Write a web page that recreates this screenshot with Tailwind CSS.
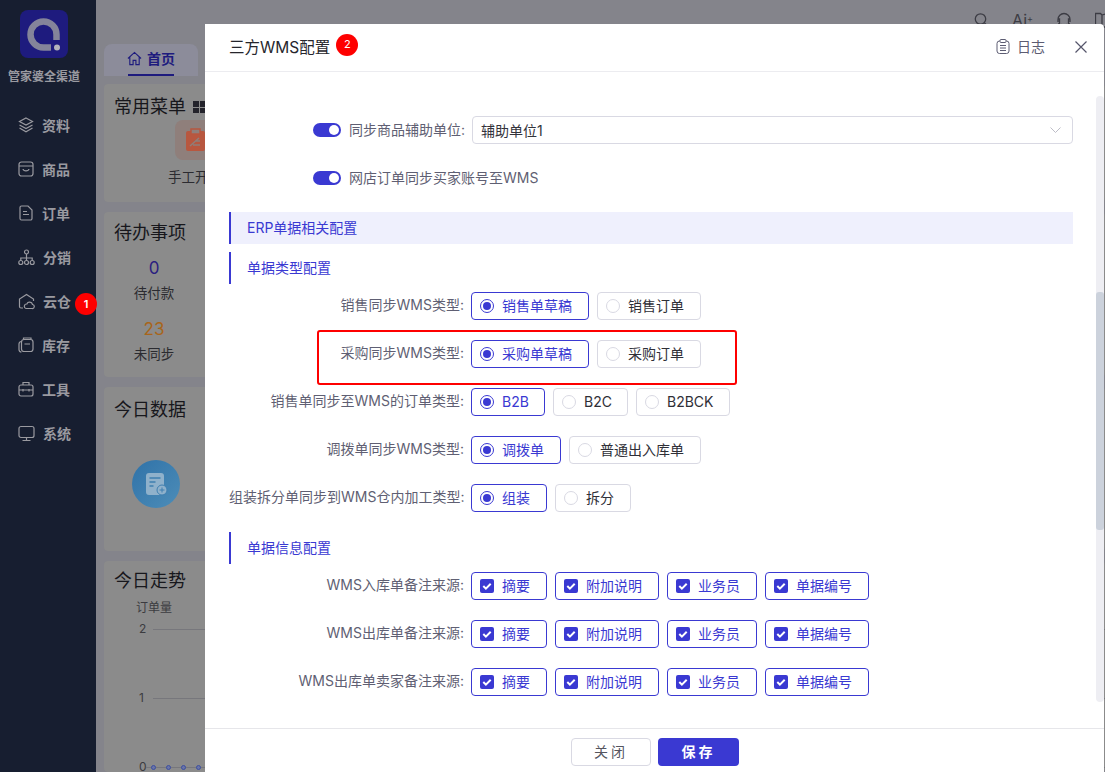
<!DOCTYPE html>
<html lang="zh-CN">
<head>
  <meta charset="UTF-8" />
  <title>三方WMS配置</title>
  <script src="https://cdn.jsdelivr.net/npm/@tailwindcss/browser@4"></script>
</head>
<body class="relative flex h-[772px] w-[1105px] overflow-hidden bg-[#84848b] font-['Inter','Noto_Sans_CJK_SC',sans-serif] text-[14px] text-[#2f2f37]">

  <!-- 左侧菜单 -->
  <aside class="flex w-[96px] shrink-0 flex-col bg-[#171e30] pt-[10px] text-[#9a9aa0]">
    <svg class="ml-[20px] h-[48px] w-[48px]" viewBox="0 0 48 48">
      <rect width="48" height="48" rx="8" fill="#1e1b7e"/>
      <path d="M31 37.500H23.500a13 13 0 1 1 13-13V30" fill="none" stroke="#84849a" stroke-width="6.500"/>
      <circle cx="37" cy="37.500" r="3" fill="#b4b4bc"/>
    </svg>
    <div class="ml-[8px] mt-[11px] text-[12px] font-bold leading-[16px] whitespace-nowrap">管家婆全渠道</div>
    <nav class="mt-[18px] flex w-full flex-col pl-[18px] text-[14px] font-bold">
      <a class="flex h-[44px] items-center gap-[8px]">
        <svg class="h-[16px] w-[16px]" viewBox="0 0 16 16" fill="none" stroke="currentColor" stroke-width="1.200"><path d="M8 1 14.500 4.500 8 8 1.500 4.500Z"/><path d="M1.500 8 8 11.500 14.500 8M1.500 11 8 14.800 14.500 11"/></svg>资料</a>
      <a class="flex h-[44px] items-center gap-[8px]">
        <svg class="h-[16px] w-[16px]" viewBox="0 0 16 16" fill="none" stroke="currentColor" stroke-width="1.200"><rect x="1" y="1" width="14" height="14" rx="2.500"/><path d="M1 5h14M5 8c.5 2.500 5.500 2.500 6 0"/></svg>商品</a>
      <a class="flex h-[44px] items-center gap-[8px]">
        <svg class="h-[16px] w-[16px]" viewBox="0 0 16 16" fill="none" stroke="currentColor" stroke-width="1.200"><path d="M2 2.500A1.500 1.500 0 0 1 3.500 1H10l4 4v8.500a1.500 1.500 0 0 1-1.500 1.500h-9A1.500 1.500 0 0 1 2 13.500Z"/><path d="M5 6.500h4M5 9.500h6"/></svg>订单</a>
      <a class="flex h-[44px] items-center gap-[8px]">
        <svg class="h-[17px] w-[17px]" viewBox="0 0 17 17" fill="none" stroke="currentColor" stroke-width="1.200"><circle cx="8.500" cy="3" r="2"/><circle cx="2.800" cy="13.500" r="2"/><circle cx="8.500" cy="13.500" r="2"/><circle cx="14.200" cy="13.500" r="2"/><path d="M8.500 5v6.500M2.800 11.500V9h11.400v2.500"/></svg>分销</a>
      <a class="flex h-[44px] items-center gap-[8px]">
        <svg class="h-[17px] w-[17px]" viewBox="0 0 17 17" fill="none" stroke="currentColor" stroke-width="1.200"><path d="M5 15H3a1.500 1.500 0 0 1-1.500-1.500V6L8.500 1.500 15.500 6v2"/><path d="M8 15.500h6a2 2 0 0 0 .5-4 3 3 0 0 0-5.700-.5A2.300 2.300 0 0 0 8 15.500Z"/></svg>云仓</a>
      <a class="flex h-[44px] items-center gap-[8px]">
        <svg class="h-[16px] w-[16px]" viewBox="0 0 16 16" fill="none" stroke="currentColor" stroke-width="1.200"><rect x="3.500" y="2.500" width="11.500" height="12" rx="2.500"/><path d="M3.500 4.500C1.500 4.500 1 6 1 7v5.500C1 14.500 2.500 15 3.500 15M5.500 2.500V1h7.500v1.500M6.500 7h5.500"/></svg>库存</a>
      <a class="flex h-[44px] items-center gap-[8px]">
        <svg class="h-[16px] w-[16px]" viewBox="0 0 16 16" fill="none" stroke="currentColor" stroke-width="1.200"><rect x="1" y="4" width="14" height="11" rx="2"/><path d="M5 4V1.500h6V4M1 9h14M5 8v2.500M11 8v2.500"/></svg>工具</a>
      <a class="flex h-[44px] items-center gap-[8px]">
        <svg class="h-[17px] w-[17px]" viewBox="0 0 17 17" fill="none" stroke="currentColor" stroke-width="1.200"><rect x="1" y="1.500" width="15" height="11" rx="2"/><path d="M8.500 12.500v3M4.500 15.500h8"/></svg>系统</a>
    </nav>
  </aside>

  <!-- 背后的首页 -->
  <main class="flex-1 pl-[8px] pt-[44px]">
    <div class="flex h-[32px] w-[94px] items-center justify-center gap-[5px] rounded-t-[8px] bg-[#8c8c9a] pb-[3px] text-[14px] font-bold text-[#1e1b7e]">
      <svg class="h-[15px] w-[15px]" viewBox="0 0 16 16" fill="none" stroke="currentColor" stroke-width="1.200"><path d="M1 8 8 1.500 15 8M3 6.500V14.500h3.500V10h3v4.500H13V6.500"/></svg>首页
    </div>
    <div class="ml-[24px] h-[2px] w-[46px] -translate-y-[2px] bg-[#1e1b7e]"></div>
    <div class="mt-[6px] flex flex-col gap-[10px]">
      <section class="h-[118px] rounded-[4px] bg-[#8b8b8b] pl-[10px] pt-[9px] text-[#17171c]">
        <h2 class="flex items-center gap-[7px] text-[18px] leading-[28px]">常用菜单
          <span class="grid h-[12px] w-[12px] grid-cols-2 gap-[1px]"><i class="bg-[#23232b]"></i><i class="bg-[#23232b]"></i><i class="bg-[#23232b]"></i><i class="bg-[#23232b]"></i></span>
        </h2>
        <div class="ml-[61px] mt-[-1px] flex h-[40px] w-[40px] items-center justify-center rounded-[8px] bg-[#8f7f7b]">
          <svg class="h-[24px] w-[24px]" viewBox="0 0 24 24"><rect x="3" y="3" width="19" height="20" rx="2" fill="#b8573f"/><rect x="8" y="1" width="9" height="5" fill="#8f7f7b" stroke="#b8573f" stroke-width="1.500"/><path d="M7 18 16 10M10 17h7M13 13h4" stroke="#8f7f7b" stroke-width="1.500"/></svg>
        </div>
        <div class="ml-[54px] mt-[7px] text-[13.500px] whitespace-nowrap text-[#2b2b30]">手工开</div>
      </section>
      <section class="h-[165px] rounded-[4px] bg-[#8b8b8b] pl-[10px] pt-[7px] text-[#17171c]">
        <h2 class="text-[18px] leading-[28px]">待办事项</h2>
        <div class="ml-[10px] mt-[9px] w-[60px] text-center">
          <div class="text-[17px] leading-[24px] text-[#2a2080]">0</div>
          <div class="mt-[2px] text-[13.500px] leading-[22px] whitespace-nowrap text-[#2b2b30]">待付款</div>
          <div class="mt-[13px] text-[17px] leading-[24px] text-[#a8651a]">23</div>
          <div class="mt-[2px] text-[13.500px] leading-[22px] whitespace-nowrap text-[#2b2b30]">未同步</div>
        </div>
      </section>
      <section class="h-[164px] rounded-[4px] bg-[#8b8b8b] pl-[10px] pt-[9px] text-[#17171c]">
        <h2 class="text-[18px] leading-[28px]">今日数据</h2>
        <div class="ml-[18px] mt-[36px] flex h-[48px] w-[48px] items-center justify-center rounded-full bg-linear-to-br from-[#2f72a8] to-[#4d8db8]">
          <svg class="h-[24px] w-[24px]" viewBox="0 0 24 24"><rect x="2" y="1" width="18" height="22" rx="3" fill="#8fb1cb"/><path d="M5.500 6h11M5.500 10h6M5.500 14h4" stroke="#3f7fb0" stroke-width="1.500"/><circle cx="18" cy="18" r="5" fill="#8fb1cb" stroke="#3f7fb0"/><path d="M15.500 18h5M18 15.500v5" stroke="#3f7fb0"/></svg>
        </div>
      </section>
      <section class="h-[211px] rounded-[4px] bg-[#8b8b8b] pl-[10px] pt-[6px] text-[#17171c]">
        <h2 class="text-[18px] leading-[28px]">今日走势</h2>
        <div class="ml-[22px] mt-[5px] text-[12px] leading-[16px] text-[#3b3b40]">订单量</div>
        <div class="mt-[6px] flex flex-col text-[12px] leading-[14px] text-[#3b3b40]">
          <div class="flex h-[69px] items-start gap-[7px] pl-[25px]"><span class="w-[7px]">2</span><span class="mt-[7px] h-px flex-1 bg-[#77777c]"></span></div>
          <div class="flex h-[69px] items-start gap-[7px] pl-[25px]"><span class="w-[7px]">1</span><span class="mt-[7px] h-px flex-1 bg-[#77777c]"></span></div>
          <div class="relative flex items-center pl-[25px]"><span class="absolute left-[32px] right-0 top-[7px] h-px bg-[#77777c]"></span><span class="w-[7px]">0</span><i class="relative ml-[5px] h-[5px] w-[5px] rounded-full border border-[#3c4fa0] bg-[#6a74a8]"></i><i class="relative ml-[10px] h-[5px] w-[5px] rounded-full border border-[#3c4fa0] bg-[#6a74a8]"></i><i class="relative ml-[10px] h-[5px] w-[5px] rounded-full border border-[#3c4fa0] bg-[#6a74a8]"></i><i class="relative ml-[10px] h-[5px] w-[5px] rounded-full border border-[#3c4fa0] bg-[#6a74a8]"></i></div>
        </div>
      </section>
    </div>
  </main>

  <!-- 云仓角标 -->
  <span class="absolute left-[75px] top-[293px] flex h-[22px] w-[22px] items-center justify-center rounded-full bg-[#fe0000] text-[11px] font-semibold text-white">1</span>

  <!-- 顶部工具图标 -->
  <div class="absolute left-[972px] top-[12px] flex gap-[22px] text-[#3c3c44]">
    <svg class="h-[18px] w-[18px]" viewBox="0 0 18 18" fill="none" stroke="currentColor" stroke-width="1.300"><circle cx="8.500" cy="7" r="5.200"/><path d="m12.500 11 3 3"/></svg>
    <span class="text-[16px] leading-[16px]">Ai<sup class="text-[9px]">+</sup></span>
    <svg class="h-[18px] w-[18px]" viewBox="0 0 18 18" fill="none" stroke="currentColor" stroke-width="1.300"><path d="M3 10V7.500a6 6 0 0 1 12 0V10M3 7h1.500v5H3M15 7h-1.500v5H15M6 12c1 1.500 5 1.500 6 0"/></svg>
    <svg class="h-[18px] w-[18px]" viewBox="0 0 18 18" fill="none" stroke="currentColor" stroke-width="1.300"><path d="M.5 1.500h5l1.500 1.500v12H.5ZM7 3l5-1.500V15H7"/></svg>
  </div>

  <!-- 弹窗 -->
  <div class="absolute left-[205px] top-[24px] flex h-[748px] w-[899px] flex-col rounded-tr-[4px] bg-white">
    <header class="flex h-[48px] shrink-0 items-center border-b border-[#ececf0] pl-[24px] pr-[17px]">
      <h1 class="text-[15.500px] text-[#26262c]">三方WMS配置</h1>
      <span class="ml-[6px] mt-[-6px] flex h-[22px] w-[22px] items-center justify-center rounded-full bg-[#fe0000] text-[11px] text-white">2</span>
      <a class="ml-auto -mt-[2px] flex items-center gap-[7px] text-[14px] text-[#5c5c72]">
        <svg class="h-[15px] w-[14px]" viewBox="0 0 14 15" fill="none" stroke="currentColor" stroke-width="1"><rect x="1" y="2" width="12" height="12.500" rx="2.500"/><rect x="4" y=".5" width="6" height="3" rx="1" fill="#fff"/><path d="M4 6.500h6M4 9h6M4 11.500h6"/></svg>日志
      </a>
      <svg class="ml-[30px] -mt-[2px] h-[12px] w-[12px] text-[#55556a]" viewBox="0 0 12 12" fill="none" stroke="currentColor" stroke-width="1.200"><path d="m.5.500 11 11M11.500.500l-11 11"/></svg>
    </header>

    <div class="relative flex-1 overflow-hidden pl-[24px] pr-[31px] pt-[44px]">
      <!-- 滚动条 -->
      <div class="absolute right-0 top-[24px] h-[606px] w-[8px] rounded-full bg-[#eeeef3]">
        <div class="mt-[196px] h-[238px] rounded-[3px] bg-[#ccd2dc]"></div>
      </div>

      <div class="flex h-[28px] items-center pl-[84px]">
        <span class="h-[14px] w-[28px] rounded-full bg-[#3a39d2] p-[2px]"><i class="ml-auto block h-[10px] w-[10px] rounded-full bg-white"></i></span>
        <span class="ml-[8px] -mt-[2px] w-[123px] whitespace-nowrap text-[#5f5f73]">同步商品辅助单位:</span>
        <div class="flex h-[28px] flex-1 items-center justify-between rounded-[4px] border border-[#d9d9e3] pl-[8px] pr-[11px]">
          <span class="text-[#33333b]">辅助单位1</span>
          <svg class="h-[6px] w-[11px] text-[#bdbdc7]" viewBox="0 0 11 6" fill="none" stroke="currentColor"><path d="m.5.500 5 5 5-5"/></svg>
        </div>
      </div>
      <div class="mt-[20px] flex h-[28px] items-center pl-[84px]">
        <span class="h-[14px] w-[28px] rounded-full bg-[#3a39d2] p-[2px]"><i class="ml-auto block h-[10px] w-[10px] rounded-full bg-white"></i></span>
        <span class="ml-[8px] -mt-[2px] whitespace-nowrap text-[#5f5f73]">网店订单同步买家账号至WMS</span>
      </div>

      <div class="mt-[20px] flex h-[32px] items-center border-l-2 border-[#3a39d2] bg-[#eff0fd] pb-[2px] pl-[16px] text-[#3a39d2]">ERP单据相关配置</div>
      <div class="mt-[8px] flex h-[32px] items-center border-l-2 border-[#3a39d2] pb-[2px] pl-[16px] text-[#3a39d2]">单据类型配置</div>
      <div id="typeRows"></div>
      <!-- 红框标注 -->
      <div class="absolute left-[112px] top-[258px] h-[55px] w-[420px] rounded-[3px] border-2 border-[#fe0000]"></div>

      <div class="mt-[20px] flex h-[32px] items-center border-l-2 border-[#3a39d2] pb-[2px] pl-[16px] text-[#3a39d2]">单据信息配置</div>
      <div id="infoRows"></div>
    </div>

    <footer class="flex h-[44px] shrink-0 justify-center gap-[7px] border-t border-[#e6e6ea] pl-[1px] pt-[9px]">
      <button class="h-[28px] w-[80px] rounded-[4px] border border-[#d9d9e3] pb-[2px] tracking-[3px] text-[#55555f]">关闭</button>
      <button class="h-[28px] w-[81px] rounded-[4px] bg-[#3a39d2] pb-[2px] font-semibold tracking-[3px] text-white">保存</button>
    </footer>
  </div>

  <script>
    const row = (label, mt, items) => `
      <div class="${mt} flex h-[28px] gap-[7px]">
        <label class="w-[235px] text-right leading-[26px] whitespace-nowrap text-[#5f5f73]">${label}</label>
        <div class="flex gap-[8px]">${items}</div>
      </div>`;

    const radioOn = (text, width) => `
      <span class="flex items-center gap-[8px] rounded-[4px] border border-[#3a39d2] pl-[8px] text-[#3a39d2]" style="width:${width}px">
        <i class="flex h-[14px] w-[14px] items-center justify-center rounded-full border border-[#3a39d2]"><b class="h-[8px] w-[8px] rounded-full bg-[#3a39d2]"></b></i>
        <em class="-mt-[2px] not-italic">${text}</em>
      </span>`;

    const radioOff = (text, width) => `
      <span class="flex items-center gap-[8px] rounded-[4px] border border-[#d9d9e3] pl-[8px]" style="width:${width}px">
        <i class="h-[14px] w-[14px] rounded-full border border-[#d9d9e3]"></i>
        <em class="-mt-[2px] not-italic">${text}</em>
      </span>`;

    const check = (text, width) => `
      <span class="flex items-center gap-[8px] rounded-[4px] border border-[#3a39d2] pl-[8px] text-[#3a39d2]" style="width:${width}px">
        <svg class="h-[14px] w-[14px]" viewBox="0 0 14 14"><rect width="14" height="14" rx="2" fill="#3a39d2"/><path d="m3.300 7 2.600 2.600 4.800-4.800" fill="none" stroke="#fff" stroke-width="2"/></svg>
        <em class="-mt-[2px] not-italic">${text}</em>
      </span>`;

    const checks = check('摘要', 76) + check('附加说明', 104) + check('业务员', 90) + check('单据编号', 104);

    document.getElementById('typeRows').innerHTML =
      row('销售同步WMS类型:', 'mt-[8px]', radioOn('销售单草稿', 118) + radioOff('销售订单', 104)) +
      row('采购同步WMS类型:', 'mt-[20px]', radioOn('采购单草稿', 118) + radioOff('采购订单', 104)) +
      row('销售单同步至WMS的订单类型:', 'mt-[20px]', radioOn('B2B', 74) + radioOff('B2C', 75) + radioOff('B2BCK', 94)) +
      row('调拨单同步WMS类型:', 'mt-[20px]', radioOn('调拨单', 90) + radioOff('普通出入库单', 132)) +
      row('组装拆分单同步到WMS仓内加工类型:', 'mt-[20px]', radioOn('组装', 76) + radioOff('拆分', 76));

    document.getElementById('infoRows').innerHTML =
      row('WMS入库单备注来源:', 'mt-[8px]', checks) +
      row('WMS出库单备注来源:', 'mt-[20px]', checks) +
      row('WMS出库单卖家备注来源:', 'mt-[20px]', checks);
  </script>
</body>
</html>
